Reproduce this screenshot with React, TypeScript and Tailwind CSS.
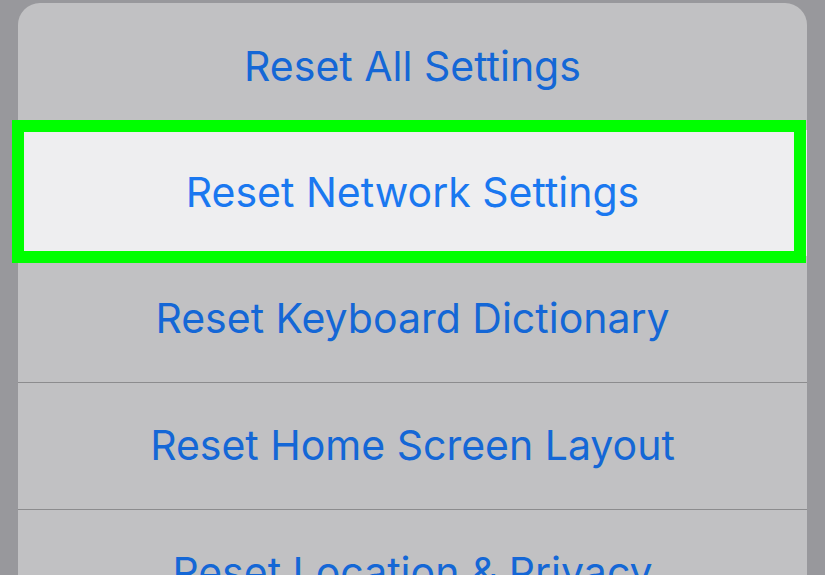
import React from "react";

const rows = [
  "Reset Keyboard Dictionary",
  "Reset Home Screen Layout",
  "Reset Location & Privacy",
];

export default function App() {
  return (
    <div
      className="w-[825px] h-[575px] overflow-hidden bg-[#98989c] pt-[3px] pl-[18px] pr-[18px]"
      style={{ fontFamily: "Inter, 'Open Sans', sans-serif" }}
    >
      <div className="w-[789px] rounded-t-[22px] bg-[#c1c1c3]">
        <div className="h-[127px] flex items-center justify-center text-[41px] text-[#1467d6]">
          Reset All Settings
        </div>
        <div className="relative h-[126px] bg-[#eeeef0] flex items-center justify-center text-[41px] text-[#1a78f0]">
          <span className="relative z-0">Reset Network Settings</span>
          <div className="absolute left-[-6px] right-[1px] top-[-10px] bottom-[-7px] border-[12px] border-[#00ff00] z-10" />
        </div>
        {rows.map((r, i) => (
          <div
            key={r}
            className={
              i === 0
                ? "h-[126px] flex items-center justify-center text-[41px] text-[#1467d6]"
                : "h-[127px] border-t border-[#8c8c8e] flex items-center justify-center text-[41px] text-[#1467d6]"
            }
          >
            {r}
          </div>
        ))}
      </div>
    </div>
  );
}
